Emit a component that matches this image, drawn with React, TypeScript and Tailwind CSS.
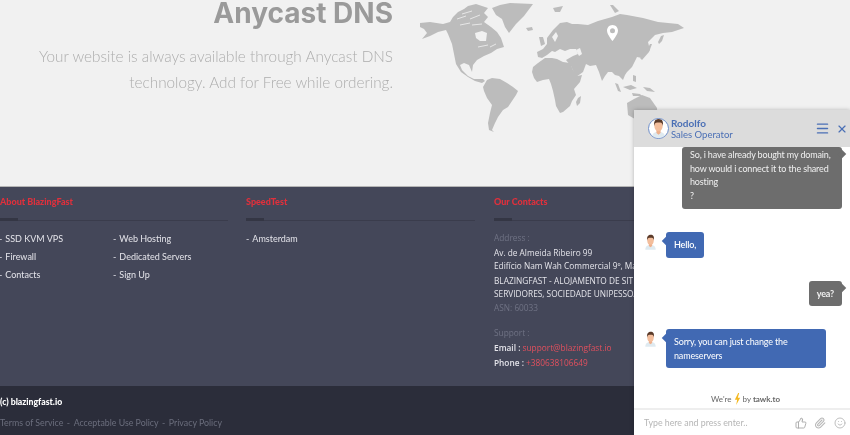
import { Menu, Paperclip, Smile, ThumbsUp, X } from "lucide-react";
import type { ReactNode } from "react";

function WorldMap() {
  return (
    <svg viewBox="0 0 290 160" className="ml-[7px] h-[160px] w-[290px] shrink-0">
      <g fill="#bcbcbc">
        {/* north america */}
        <path d="M20 23 L30 22 L43 24 L50 22 L53 17 L58 12 L64 9 L68 6 L76 4 L88 8 L84 13 L88 17 L84 22 L91 27 L97 32 L101 38 L104 47 L97 49 L91 53 L84 56 L77 60 L73 65 L72 72 L69 65 L64 63 L60 65 L62 70 L68 76 L74 79 L83 79 L85 81 L82 83 L75 81 L68 77 L61 72 L56 64 L54 54 L52 44 L48 34 L46 30 L38 32 L30 36 L22 39 L27 33 L24 29 L20 27 Z" />
        <path d="M75 33 L82 31 L87 33 L86 41 L80 41 L76 38 Z" fill="#f1f1f1" />
        <path d="M57 19 L66 16 M62 14 L72 11 M70 19 L80 15 M60 25 L70 23 M72 25 L82 24 M78 47 L88 45 M90 47 L96 44" fill="none" stroke="#f1f1f1" strokeWidth="0.800" />
        {/* greenland */}
        <path d="M92 8 L100 5 L110 3 L133 4 L127 12 L124 16 L116 24 L109 33 L105 27 L102 19 L96 15 Z" />
        <path d="M126 28 L132 27 L133 30 L128 31 Z M153 8 L163 6 L160 12 L155 12 Z M139 37 L143 37 L145 44 L141 46 Z" />
        {/* south america */}
        <path d="M83 87 L87 80 L92 78 L100 79 L107 83 L113 87 L118 91 L116 95 L112 101 L108 107 L103 110 L98 117 L95 123 L92 130 L94 132 L89 130 L88 123 L90 113 L92 105 L87 98 L84 91 Z" />
        {/* africa */}
        <path d="M132 72 L133 67 L138 63 L145 58 L152 58 L157 59 L163 62 L170 63 L173 70 L177 76 L182 75 L180 82 L174 89 L176 95 L172 101 L170 106 L163 112 L160 113 L156 106 L155 100 L153 91 L151 84 L149 79 L143 80 L137 82 L134 78 Z" />
        <path d="M178 98 L181 96 L180 103 L177 106 L176 102 Z" />
        {/* europe and asia */}
        <path d="M138 57 L137 52 L143 49 L147 44 L147 38 L153 30 L160 23 L167 22 L172 24 L178 24 L188 25 L198 21 L212 17 L220 14 L227 15 L243 18 L258 22 L278 24 L284 28 L272 32 L263 33 L255 35 L248 42 L250 50 L242 58 L237 57 L232 67 L227 72 L225 75 L223 80 L219 76 L215 75 L212 72 L208 72 L205 76 L202 81 L199 72 L196 65 L190 66 L186 64 L183 72 L176 77 L171 66 L166 60 L173 56 L178 54 L176 49 L170 49 L165 51 L160 49 L155 52 L152 51 L147 55 L142 58 Z" />
        <path d="M176 50 L180 48 L182 54 L179 56 Z M152 37 L156 32 L158 36 L155 42 Z" fill="#f1f1f1" />
        {/* islands of east asia */}
        <path d="M210 5 L213 5 L219 11 L215 13 Z M258 42 L261 36 L264 35 L262 41 L259 44 Z M250 44 L252 44 L249 52 L242 60 L240 58 L246 52 Z" />
        <path d="M215 83 L218 84 L221 92 L218 91 Z M223 87 L231 85 L237 88 L230 90 Z M233 75 L236 76 L236 82 L233 81 Z M243 87 L250 88 L255 92 L247 91 Z M232 93 L240 94 L242 96 L233 96 Z" />
        {/* australia */}
        <path d="M227 103 L234 99 L242 95 L250 98 L257 108 L258 125 L240 122 L228 115 Z" />
      </g>
      <path
        d="M212.500 25 C209 25 207 27.800 207 30.800 C207 34.500 212.500 41 212.500 41 C212.500 41 218 34.500 218 30.800 C218 27.800 216 25 212.500 25 Z M212.500 28.300 A2.500 2.500 0 1 1 212.500 33.300 A2.500 2.500 0 1 1 212.500 28.300 Z"
        fill="#ffffff"
        fillRule="evenodd"
      />
    </svg>
  );
}

function FooterTitle({ children }: { children: ReactNode }) {
  return (
    <div className="relative h-[33px] border-b border-[#3a3c4c] text-[9px] font-black leading-[28px] text-[#e0303c]">
      {children}
      <div className="absolute -bottom-px left-0 h-[3px] w-[18px] bg-[#343644]" />
    </div>
  );
}

function FooterLink({ children }: { children: ReactNode }) {
  return (
    <div className="flex h-[18px] gap-[3px] whitespace-nowrap leading-[18px]">
      <span>-</span>
      <span>{children}</span>
    </div>
  );
}

function Avatar({ small }: { small?: boolean }) {
  return (
    <svg viewBox="0 0 20 24" className={small ? "h-[16px] w-[13px]" : "h-[20px] w-[17px]"}>
      <path d="M2 24 C2 18 6 16.500 10 16.500 C14 16.500 18 18 18 24 Z" fill="#dfeaf0" />
      <path d="M7.500 14 L12.500 14 L12.500 18 L10 20 L7.500 18 Z" fill="#eeb08c" />
      <ellipse cx="10" cy="9.500" rx="5" ry="6.500" fill="#f3bd9b" />
      <path d="M4.700 9.500 C4 3 7 1 10.500 1 C14 1 16 3.500 15.300 9.500 C14.800 7 14 5.500 12 5.500 C10 5.500 7 5.500 5.800 6.500 C5.200 7.200 5 8.500 4.700 9.500 Z" fill="#5b3a29" />
    </svg>
  );
}

function AgentBubble({ children }: { children: ReactNode }) {
  return (
    <div className="flex items-start">
      <div className="flex w-[32px] justify-center pt-[2px]">
        <Avatar small />
      </div>
      <div className="relative rounded-[3px] bg-[#4169b3] px-[8px] py-[6px] text-[9px] tracking-[-0.150px] text-white">
        <div className="absolute left-[-3px] top-[6px] h-[6px] w-[6px] rotate-45 bg-[#4169b3]" />
        {children}
      </div>
    </div>
  );
}

function VisitorBubble({ className, children }: { className: string; children: ReactNode }) {
  return (
    <div className={`relative self-end rounded-[3px] bg-[#6d6d6d] px-[8px] text-[9px] tracking-[-0.150px] text-[#f0f0f0] ${className}`}>
      <div className="absolute right-[-3px] top-[4px] h-[6px] w-[6px] rotate-45 bg-[#6d6d6d]" />
      {children}
    </div>
  );
}

function ChatWidget() {
  return (
    <div className="absolute bottom-0 right-0 top-[110px] flex w-[216px] flex-col bg-white font-['Lato',sans-serif] shadow-[0_0_4px_rgba(0,0,0,0.25)]">
      <div className="flex h-[37px] shrink-0 items-center bg-[#dcdcdc] pl-[14px] pr-[2px]">
        <div className="flex h-[21px] w-[21px] items-end justify-center overflow-hidden rounded-full border border-[#6f8fca] bg-white">
          <Avatar />
        </div>
        <div className="ml-[2px] leading-[12px] text-[#4a6fb5]">
          <div className="text-[10px] font-bold">Rodolfo</div>
          <div className="text-[9.500px]">Sales Operator</div>
        </div>
        <Menu className="ml-auto h-[15px] w-[15px] text-[#4a6fb5]" strokeWidth={2.300} />
        <X className="ml-[6px] h-[12px] w-[12px] text-[#4a6fb5]" strokeWidth={2.300} />
      </div>
      <div className="flex flex-col gap-[23px] pr-[8px] leading-[13.500px]">
        <VisitorBubble className="w-[160px] pb-[7px] pt-[1px]">
          So, i have already bought my domain, how would i connect it to the shared hosting
          <br />?
        </VisitorBubble>
        <AgentBubble>
          <div className="font-semibold">Hello,</div>
        </AgentBubble>
        <VisitorBubble className="py-[6px] font-bold">yea?</VisitorBubble>
        <AgentBubble>
          <div className="w-[144px]">
            Sorry, you can just change the
            <br />
            nameservers
          </div>
        </AgentBubble>
      </div>
      <div className="mt-auto flex items-center justify-center gap-[2px] pb-[3px] pl-[7px] text-[8px] leading-[12px] text-[#666666]">
        <span>We're</span>
        <svg viewBox="0 0 10 18" className="h-[12px] w-[7px]">
          <path d="M6 0 L1 10 L4.500 10 L3 18 L9 7 L5.500 7 L7.500 0 Z" fill="#f5b921" />
        </svg>
        <span>
          by <span className="font-bold">tawk.to</span>
        </span>
      </div>
      <div className="flex h-[27px] shrink-0 items-center border-t-2 border-[#eeeeee] pl-[10px] pr-[4px] text-[8.800px] text-[#b5b5b5]">
        <span>Type here and press enter..</span>
        <ThumbsUp className="ml-auto h-[12px] w-[12px] text-[#a8a8a8]" strokeWidth={1.800} />
        <Paperclip className="ml-[7px] h-[12px] w-[12px] text-[#b8b8b8]" strokeWidth={2.200} />
        <Smile className="ml-[8px] h-[12px] w-[12px] text-[#b8b8b8]" strokeWidth={1.800} />
      </div>
    </div>
  );
}

export default function App() {
  return (
    <div className="relative h-[435px] w-[850px] overflow-hidden bg-[#f1f1f1] font-['Lato',sans-serif] blur-[0.4px]">
      <section className="flex h-[186px] overflow-hidden">
        <div className="w-[393px] shrink-0 whitespace-nowrap text-right">
          <h1 className="font-['Inter',sans-serif] text-[28px] font-bold leading-[27px] text-[#9a9a9a]">Anycast DNS</h1>
          <p className="mt-[16px] text-[15.300px] font-light leading-[26px] text-[#adadad]">
            Your website is always available through Anycast DNS
            <br />
            technology. Add for Free while ordering.
          </p>
        </div>
        <WorldMap />
      </section>

      <footer className="border-t border-[#b5b5b5]">
        <div className="flex h-[199px] bg-[#444759] pt-[1px] text-[9px] text-[#e4e4ea]">
          <div className="mr-[18px] w-[228px]">
            <FooterTitle>About BlazingFast</FooterTitle>
            <div className="-ml-px mt-[9px] flex">
              <div className="w-[114px]">
                <FooterLink>SSD KVM VPS</FooterLink>
                <FooterLink>Firewall</FooterLink>
                <FooterLink>Contacts</FooterLink>
              </div>
              <div>
                <FooterLink>Web Hosting</FooterLink>
                <FooterLink>Dedicated Servers</FooterLink>
                <FooterLink>Sign Up</FooterLink>
              </div>
            </div>
          </div>
          <div className="mr-[19px] w-[229px]">
            <FooterTitle>SpeedTest</FooterTitle>
            <div className="mt-[9px]">
              <FooterLink>Amsterdam</FooterLink>
            </div>
          </div>
          <div className="w-[300px]">
            <FooterTitle>Our Contacts</FooterTitle>
            <div className="mt-[11px] whitespace-nowrap font-['Open_Sans',sans-serif] text-[8.300px] leading-[12.500px]">
              <div className="text-[#6f7284]">Address :</div>
              <div className="mt-[2.500px]">Av. de Almeida Ribeiro 99</div>
              <div>Edifício Nam Wah Commercial 9º, Macau</div>
              <div className="mt-[3px]">BLAZINGFAST - ALOJAMENTO DE SITIOS E</div>
              <div>SERVIDORES, SOCIEDADE UNIPESSOAL</div>
              <div className="mt-[2px] text-[#6f7284]">ASN: 60033</div>
              <div className="mt-[12.500px] text-[#6f7284]">Support :</div>
              <div className="mt-[2.500px] font-semibold">
                Email : <span className="font-normal text-[#e2505e]">support@blazingfast.io</span>
              </div>
              <div className="mt-[2.500px] font-semibold">
                Phone : <span className="font-normal text-[#e2505e]">+380638106649</span>
              </div>
            </div>
          </div>
        </div>
        <div className="h-[49px] bg-[#2b2d3a] pt-[10px]">
          <div className="text-[8.700px] font-black leading-[12px] text-white">(c) blazingfast.io</div>
          <div className="mt-[9px] flex gap-[3.500px] whitespace-nowrap text-[8.800px] leading-[12px] text-[#6b6e7d]">
            <span>Terms of Service</span>
            <span>-</span>
            <span>Acceptable Use Policy</span>
            <span>-</span>
            <span>Privacy Policy</span>
          </div>
        </div>
      </footer>

      <ChatWidget />
    </div>
  );
}
